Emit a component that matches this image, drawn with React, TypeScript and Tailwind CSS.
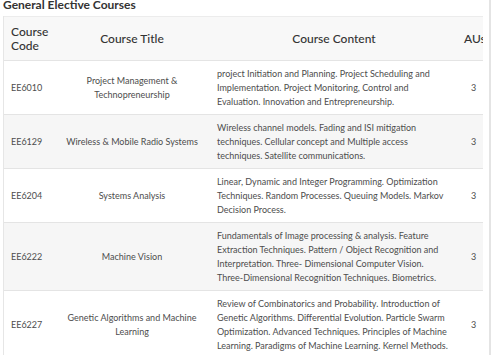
import React from "react";

type Course = {
  code: string;
  title: string[];
  content: string;
  aus: number;
};

const courses: Course[] = [
  {
    code: "EE6010",
    title: ["Project Management &", "Technopreneurship"],
    content:
      "project Initiation and Planning. Project Scheduling and Implementation. Project Monitoring, Control and Evaluation. Innovation and Entrepreneurship.",
    aus: 3,
  },
  {
    code: "EE6129",
    title: ["Wireless & Mobile Radio Systems"],
    content:
      "Wireless channel models. Fading and ISI mitigation techniques. Cellular concept and Multiple access techniques. Satellite communications.",
    aus: 3,
  },
  {
    code: "EE6204",
    title: ["Systems Analysis"],
    content:
      "Linear, Dynamic and Integer Programming. Optimization Techniques. Random Processes. Queuing Models. Markov Decision Process.",
    aus: 3,
  },
  {
    code: "EE6222",
    title: ["Machine Vision"],
    content:
      "Fundamentals of Image processing & analysis. Feature Extraction Techniques. Pattern / Object Recognition and Interpretation. Three- Dimensional Computer Vision. Three-Dimensional Recognition Techniques. Biometrics.",
    aus: 3,
  },
  {
    code: "EE6227",
    title: ["Genetic Algorithms and Machine", "Learning"],
    content:
      "Review of Combinatorics and Probability. Introduction of Genetic Algorithms. Differential Evolution. Particle Swarm Optimization. Advanced Techniques. Principles of Machine Learning. Paradigms of Machine Learning. Kernel Methods.",
    aus: 3,
  },
];

const App = () => {
  return (
    <div className="w-[491px] h-[355px] overflow-hidden border-r-2 border-[#e4e4e4] bg-white font-['Lato','Noto_Sans',sans-serif]">
      <h2 className="-mt-[3px] pl-[3px] h-[19px] text-[12px] leading-[16px] font-bold text-[#333]">
        General Elective Courses
      </h2>

      <div className="ml-[3px] w-[480px] overflow-hidden border-l border-[#e6e6e6]">
        <table className="w-[490px] table-fixed border-collapse">
          <colgroup>
            <col className="w-[50px]" />
            <col className="w-[156px]" />
            <col className="w-[248px]" />
            <col className="w-[36px]" />
          </colgroup>
          <thead className="bg-[#f8f8f8]">
            <tr className="h-[44px] border-t border-[#ececec] text-[12px] leading-[14px] text-[#333]">
              <th className="px-[7px] text-left font-medium">Course Code</th>
              <th className="px-[7px] text-center font-medium">Course Title</th>
              <th className="px-[7px] text-center font-medium">Course Content</th>
              <th className="pl-[6px] text-left font-medium">AUs</th>
            </tr>
          </thead>
          <tbody>
            {courses.map((c, i) => (
              <tr
                key={c.code}
                className={`border-t border-[#e4e4e4] text-[9px] leading-[14px] text-[#4d4d4d] ${
                  i % 2 === 1 ? "bg-[#f6f6f6]" : "bg-white"
                }`}
              >
                <td className="px-[7px] pt-[6px] pb-[5px] align-middle">{c.code}</td>
                <td className="px-[7px] pt-[6px] pb-[5px] text-center align-middle">
                  {c.title.map((t) => (
                    <div key={t}>{t}</div>
                  ))}
                </td>
                <td className="px-[7px] pt-[6px] pb-[5px] align-middle">{c.content}</td>
                <td className="pl-[13px] pt-[6px] pb-[5px] align-middle">{c.aus}</td>
              </tr>
            ))}
          </tbody>
        </table>
      </div>
    </div>
  );
};

export default App;
